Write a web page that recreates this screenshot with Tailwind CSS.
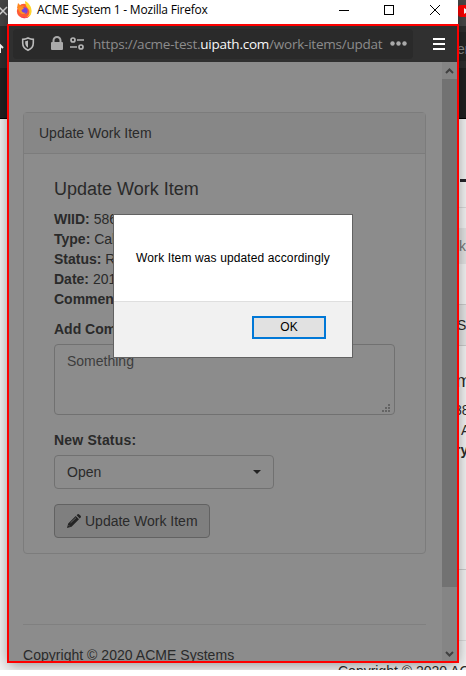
<!DOCTYPE html>
<html lang="en">
<head>
<meta charset="utf-8">
<title>ACME System 1</title>
<script src="https://cdn.jsdelivr.net/npm/@tailwindcss/browser@4"></script>
</head>
<body class="bg-white font-['Liberation_Sans',Arial,sans-serif] text-[14px] leading-5 text-[#2a2a2a]">
<div class="relative h-[676px] w-[466px] overflow-hidden">

  <!-- Browser window behind the popup -->
  <div class="absolute inset-x-0 top-0 h-[670px] overflow-hidden bg-[#f3f3f3]">
    <div class="h-[26px] bg-[#474747]"></div>
    <div class="h-[42px] bg-[#2d2d2d]"></div>
    <div class="h-[51px] border-b border-black bg-[#202020]"></div>
    <svg class="absolute left-0 top-0" width="9" height="60" fill="none" stroke="#e0e0e0" stroke-width="1.5"><path d="M-1 7 7 15M7 7-1 15"/><path d="M0 53V46M-4 48l4-3 3 3" stroke="#fff" stroke-width="2"/></svg>
    <svg class="absolute left-[458px] top-[5px]" width="8" height="12"><rect width="14" height="12" rx="3" fill="#f00"/><path d="M6 3v6l5-3z" fill="#fff"/></svg>
    <div class="absolute left-[458px] top-[32px] h-[29px] w-2 bg-[#252525]"></div>
    <div class="absolute left-[457px] top-[39px] text-[#8b8b8b]">er</div>
    <div class="absolute left-[460px] top-[179px] h-[3px] w-[6px] bg-[#25252b]"></div>
    <div class="absolute left-[458px] top-[207px] h-px w-2 bg-[#dadada]"></div>
    <div class="absolute left-[458px] top-[228px] h-9 w-2 bg-[#e3e3e3]"></div>
    <div class="absolute left-[459px] top-[236px] text-[#777]">k</div>
    <div class="absolute left-[458px] top-[304px] h-[42px] w-2 border-y border-[#ccc] bg-[#e5e5e5]"></div>
    <div class="absolute left-[457px] top-[315px]">S</div>
    <div class="absolute left-[456px] top-[371px] text-[18px]">m</div>
    <div class="absolute left-[454px] top-[400px]">88</div>
    <div class="absolute left-[461px] top-[420px]">A</div>
    <div class="absolute left-[455px] top-[440px] font-bold">ry</div>
    <div class="absolute left-[458px] top-[569px] h-px w-2 bg-[#ccc]"></div>
    <div class="absolute left-[458px] top-[640px] h-px w-2 bg-[#ddd]"></div>
    <div class="absolute left-[338px] top-[661px] whitespace-nowrap">Copyright © 2020 AC</div>
    <div class="absolute left-[8px] top-0 h-[662px] w-[450px] shadow-[0_3px_14px_rgba(0,0,0,0.4)]"></div>
  </div>

  <!-- Popup window -->
  <div class="absolute left-[7px] top-0 flex h-[663px] w-[452px] flex-col">
    <div class="mx-px flex h-6 shrink-0 items-center bg-white pb-[5px] pl-2 text-black">
      <svg width="16" height="18" viewBox="0 0 16 18">
        <circle cx="8" cy="10" r="7.2" fill="#ff5a36"/>
        <path d="M1 7 2 2l3 3c2-1 3 0 3 1L6 8z" fill="#ff861f"/>
        <path d="M9 0c4 2 7 6 6.500 11C15 15 12 17 9 17c4-2 5-5 4-8-1-2-4-4-4-9z" fill="#ffd42c"/>
        <path d="M2 13c2 4 8 5 12 1-2 4-8 5-12-1z" fill="#f42563"/>
        <circle cx="8.300" cy="9.700" r="3.300" fill="#7544dc"/>
        <path d="M2 7c2-1 4-1 6 .5L5.500 9c0 2 2 3.500 4.500 2.500-2 3-7 2-8-4.500z" fill="#ff9424"/>
      </svg>
      <div class="ml-[5px] w-[172px] whitespace-nowrap font-['Open_Sans',sans-serif] text-[12px] tracking-[-0.21px]">ACME System 1 - Mozilla Firefox</div>
      <svg class="ml-auto mr-[16px]" width="104" height="12" fill="none" stroke="#000" shape-rendering="crispEdges"><path d="M1 6.500H11"/><rect x="46.500" y="1.500" width="9" height="9"/><path d="M92 1 102 11M102 1 92 11" shape-rendering="auto"/></svg>
    </div>

    <div class="flex min-h-0 flex-1 flex-col border-2 border-[#fe0000]">
      <div class="flex h-9 shrink-0 items-center bg-[#303030] pl-1">
        <div class="flex h-[30px] w-[400px] items-center rounded-sm bg-[#2a2a2a]">
          <svg class="ml-[8px] shrink-0" width="64" height="16" fill="none">
            <path d="M7 2C5 3 3 3.400 1.700 3.400V7c0 3.500 2.300 6 5.300 7.300 3-1.300 5.300-3.800 5.300-7.300V3.400C11 3.400 9 3 7 2z" stroke="#bbb" stroke-width="1.600"/>
            <path d="M7 4.500v7.300C5 10.500 4.200 9 4.200 6.500V5.200C5.200 5.100 6 5 7 4.500z" fill="#bbb"/>
            <rect x="30" y="6" width="12" height="8" rx="1" fill="#aaa"/><path d="M32.500 7V4.500a3.500 3.500 0 0 1 7 0v3" stroke="#aaa" stroke-width="2"/>
            <g stroke="#b5b5b5" stroke-width="1.700"><path d="M56 4h7M49 11h7"/><circle cx="52" cy="4" r="2"/><circle cx="60" cy="11" r="2"/></g>
          </svg>
          <div class="ml-[8px] h-5 w-[292px] overflow-hidden whitespace-nowrap font-['Open_Sans',sans-serif] text-[13.5px] leading-5 tracking-[-0.24px] text-[#8c8c8c]">https://acme-test.<span class="text-[#f8f8f8]">uipath.com</span>/work-items/updat</div>
          <svg class="ml-[5px] shrink-0" width="18" height="6" fill="#aaa"><circle cx="2.500" cy="2.500" r="2.200"/><circle cx="8.500" cy="2.500" r="2.200"/><circle cx="14.500" cy="2.500" r="2.200"/></svg>
        </div>
        <svg class="ml-5" width="12" height="13" fill="#fff"><path d="M0 0h12v2H0zM0 5h12v2H0zM0 10h12v2H0z"/></svg>
      </div>

      <div class="flex min-h-0 flex-1 bg-[#8c8c8c]">
        <main class="flex w-[433px] flex-col overflow-hidden pl-[14px] pr-4 pt-[50px]">
          <section class="h-[442px] shrink-0 rounded border border-[#7c7c7c]">
            <h3 class="h-[41px] border-b border-[#7c7c7c] bg-[#878787] py-[10px] pl-[15px]">Update Work Item</h3>
            <div class="flex flex-col px-[30px] pt-[25px]">
              <h4 class="mb-[10px] h-5 text-[18px] leading-5">Update Work Item</h4>
              <div class="whitespace-nowrap">
                <p><b>WIID:</b> 586</p>
                <p><b>Type:</b> Cal</p>
                <p><b>Status:</b> R</p>
                <p><b>Date:</b> 201</p>
                <p><b>Comments:</b></p>
              </div>
              <label class="mt-[10px] font-bold">Add Comments:</label>
              <div class="relative mt-[5px] h-[71px] w-[341px] rounded border border-[#717171] px-3 py-[6px] text-[#3d3d3d]">Something
                <svg class="absolute bottom-[1px] right-[3px]" width="9" height="9" fill="#646464" shape-rendering="crispEdges"><path d="M6 0h2v2H6zM3 3h2v2H3zM6 3h2v2H6zM0 6h2v2H0zM3 6h2v2H3zM6 6h2v2H6z"/></svg>
              </div>
              <label class="mt-[15px] font-bold tracking-[0.2px]">New Status:</label>
              <div class="mt-[5px] flex h-[34px] w-[220px] items-center justify-between rounded border border-[#717171] px-3">Open<svg width="8" height="4" fill="#222"><path d="M0 0h8L4 4z"/></svg></div>
              <button class="mt-[15px] flex h-[34px] w-[156px] items-center rounded border border-[#626262] bg-[#7f7f7f] pl-3">
                <svg width="14" height="14" viewBox="0 0 14 14" fill="#242424"><path d="M9.600 1.200 10.600.3q.8-.6 1.600.1L13.600 1.800q.7.800.1 1.600L12.700 4.400zM8.700 2 12 5.300 4.500 12.800 0 14l1.200-4.500z"/><path d="M3.600 8.800 9 3.700M1.700 11.300 2.700 12.300" stroke="#7f7f7f" stroke-width=".7"/></svg>
                <span class="ml-[4px]">Update Work Item</span>
              </button>
            </div>
          </section>
          <footer class="mt-[70px] shrink-0 whitespace-nowrap border-t border-[#808080] pt-5 tracking-[0.03px]">Copyright © 2020 ACME Systems</footer>
        </main>
        <div class="flex w-[15px] flex-col bg-[#858585]">
          <svg width="15" height="17" fill="none" stroke="#404040" stroke-width="2"><path d="m4 11 3.500-3.500L11 11"/></svg>
          <div class="h-[508px] bg-[#727272]"></div>
          <svg class="mt-auto" width="15" height="17" fill="none" stroke="#404040" stroke-width="2"><path d="m4 8 3.500 3.500L11 8"/></svg>
        </div>
      </div>
    </div>
  </div>

  <!-- Alert dialog -->
  <div role="alertdialog" class="absolute left-[113px] top-[214px] flex h-[144px] w-[240px] flex-col border border-[#626262] bg-[#f1f1f1] text-[12px] text-black">
    <div class="flex h-[87px] items-center border-b border-[#dfdfdf] bg-white pl-[22px]"><span class="whitespace-nowrap tracking-[0.12px]">Work Item was updated accordingly</span></div>
    <button class="mr-[26px] mt-[14px] h-[23px] w-[74px] self-end border-2 border-[#0078d7] bg-[#e1e1e1] leading-[19px]">OK</button>
  </div>
</div>
</body>
</html>
